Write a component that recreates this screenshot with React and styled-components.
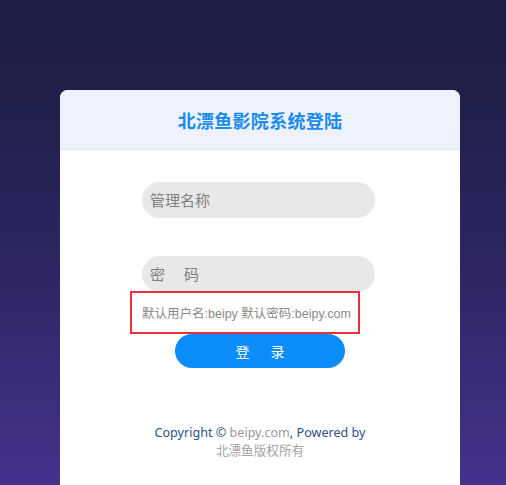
import React from 'react';
import styled, { createGlobalStyle } from 'styled-components';

const GlobalStyle = createGlobalStyle`
  html, body {
    margin: 0;
    padding: 0;
  }
  body {
    font-family: "Noto Sans", "Noto Sans CJK SC", sans-serif;
    background: linear-gradient(180deg, #1e1f48 0%, #1f1f4a 20%, #2f2766 60%, #46318d 100%);
    min-height: 485px;
    overflow: hidden;
  }
`;

const Page = styled.div`
  height: 485px;
  padding: 90px 0 0 60px;
  box-sizing: border-box;
  overflow: hidden;
`;

const Card = styled.div`
  width: 400px;
  height: 420px;
  background: #fff;
  border-radius: 8px;
  overflow: hidden;
`;

const Header = styled.div`
  height: 59px;
  background: #edf2fc;
  border-bottom: 1px solid #e3e8f0;
  display: flex;
  align-items: center;
  justify-content: center;
`;

const Title = styled.h1`
  margin: 0;
  font-size: 18px;
  font-weight: 700;
  color: #1a8cf0;
  letter-spacing: 0.3px;
`;

const Form = styled.div`
  display: flex;
  flex-direction: column;
  padding-top: 32px;
`;

const Field = styled.input`
  margin-left: 82px;
  width: 233px;
  height: 36px;
  margin-bottom: ${p => p.$gap || 0}px;
  border: none;
  outline: none;
  border-radius: 18px;
  background: #e8e8e8;
  padding: 0 8px;
  box-sizing: border-box;
  font-family: "Noto Sans", "Noto Sans CJK SC", sans-serif;
  font-size: 15px;
  color: #333;

  &::placeholder {
    color: #7f7f7f;
  }
`;

const Tip = styled.div`
  margin: -1px 0 0 70px;
  width: 230px;
  height: 43px;
  box-sizing: border-box;
  border: 2px solid #e8323a;
  display: flex;
  align-items: center;
  padding-left: 10px;
  font-family: "Liberation Sans", "Noto Sans CJK SC", sans-serif;
  font-size: 12.5px;
  color: #8a8a8a;
  white-space: nowrap;
`;

const LoginButton = styled.button`
  margin-left: 115px;
  width: 170px;
  height: 34px;
  border: none;
  border-radius: 17px;
  background: #0d8cfb;
  color: #fff;
  font-family: "Noto Sans", "Noto Sans CJK SC", sans-serif;
  font-size: 14px;
  display: flex;
  align-items: center;
  justify-content: center;
  gap: 21px;
  cursor: pointer;
`;

const Footer = styled.div`
  margin-top: 56px;
  text-align: center;
  font-size: 12.6px;
  line-height: 18px;
  color: #2c5183;
`;

const Muted = styled.span`
  color: #999;
`;

const Line = styled.div`
  color: ${p => p.$muted ? '#a3a3a3' : 'inherit'};
`;

const App = () => {
  return (
    <>
      <GlobalStyle />
      <Page>
        <Card>
          <Header>
            <Title>北漂鱼影院系统登陆</Title>
          </Header>
          <Form>
            <Field type="text" placeholder="管理名称" $gap={38} />
            <Field type="password" placeholder={'密\u3000 码'} />
            <Tip>默认用户名:beipy 默认密码:beipy.com</Tip>
            <LoginButton>
              <span>登</span>
              <span>录</span>
            </LoginButton>
          </Form>
          <Footer>
            <Line>Copyright © <Muted>beipy.com</Muted>, Powered by</Line>
            <Line $muted>北漂鱼版权所有</Line>
          </Footer>
        </Card>
      </Page>
    </>
  );
};

export default App;
